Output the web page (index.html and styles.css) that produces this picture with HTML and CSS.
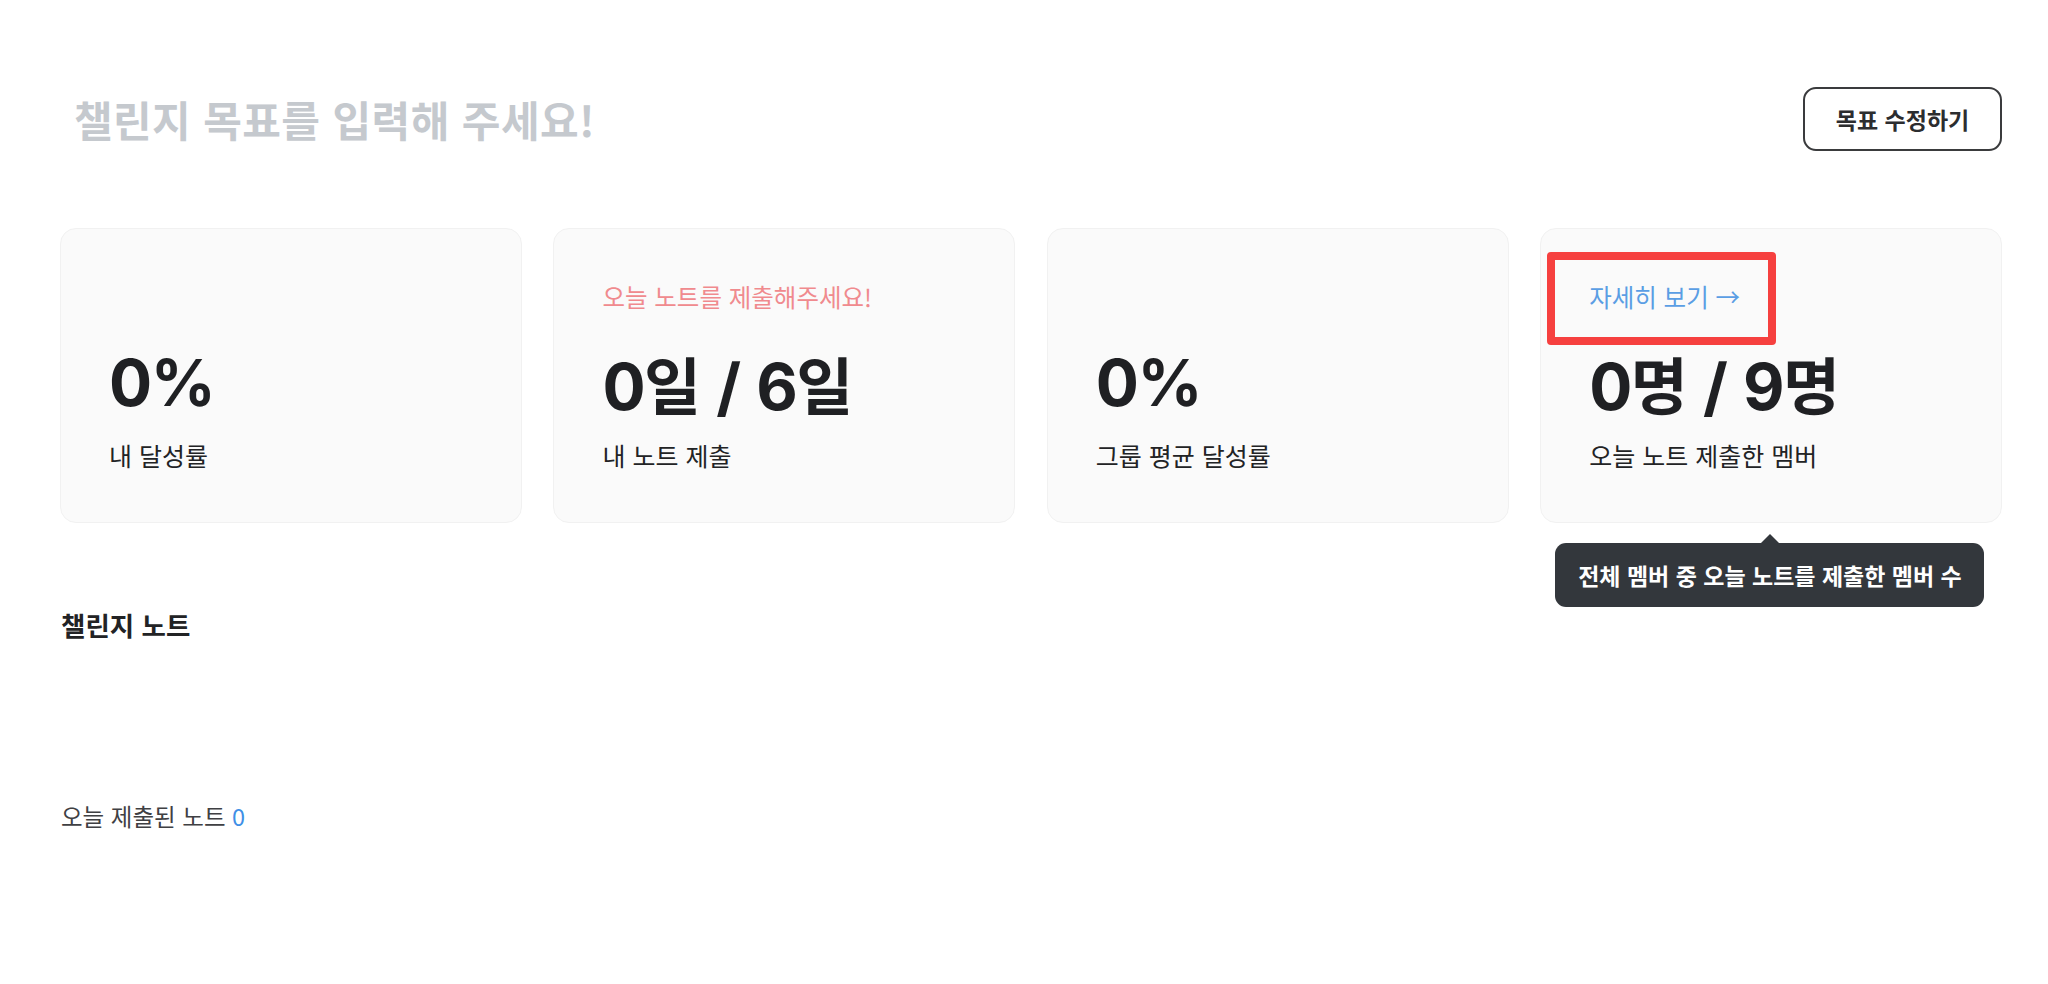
FILE: index.html
```html
<!DOCTYPE html>
<html lang="ko">
<head>
<meta charset="utf-8">
<title>챌린지</title>
<link rel="stylesheet" href="styles.css">
</head>
<body>
<main class="page">
  <header class="header">
    <h1 class="goal-title">챌린지 목표를 입력해 주세요!</h1>
    <button class="edit-btn" type="button">목표 수정하기</button>
  </header>

  <section class="stats">
    <div class="card">
      <div class="card-top"></div>
      <div class="card-value">0%</div>
      <div class="card-label">내 달성률</div>
    </div>
    <div class="card">
      <div class="card-top card-top--warn">오늘 노트를 제출해주세요!</div>
      <div class="card-value">0<span class="unit">일</span> / 6<span class="unit">일</span></div>
      <div class="card-label">내 노트 제출</div>
    </div>
    <div class="card">
      <div class="card-top"></div>
      <div class="card-value">0%</div>
      <div class="card-label">그룹 평균 달성률</div>
    </div>
    <div class="card card--tip">
      <div class="card-top"><a class="detail-link" href="#">자세히 보기 →</a></div>
      <div class="card-value">0<span class="unit">명</span> / 9<span class="unit">명</span></div>
      <div class="card-label">오늘 노트 제출한 멤버</div>
      <div class="highlight-box"></div>
      <div class="tooltip">전체 멤버 중 오늘 노트를 제출한 멤버 수</div>
    </div>
  </section>

  <h2 class="section-title">챌린지 노트</h2>
  <p class="today-count">오늘 제출된 노트 <span class="count">0</span></p>
</main>
</body>
</html>
```

FILE: styles.css
```css
* { box-sizing: border-box; }
html, body { margin: 0; padding: 0; background: #ffffff; }
body {
  font-family: "Noto Sans CJK KR", "Noto Sans", sans-serif;
  color: #222325;
}
.page {
  padding: 87px 46px 0 60px;
}
.header {
  display: flex;
  align-items: center;
  justify-content: space-between;
  height: 64px;
}
.goal-title {
  margin: 0;
  padding-left: 14px;
  font-size: 42px;
  font-weight: 700;
  line-height: 64px;
  color: #c5c9ce;
  letter-spacing: 0.4px;
}
.edit-btn {
  width: 199px;
  height: 64px;
  border: 2px solid #3a3b3d;
  border-radius: 13px;
  background: #fff;
  font-family: "Noto Sans CJK KR", sans-serif;
  font-size: 23px;
  font-weight: 700;
  color: #2c2d2f;
  padding: 0;
}
.stats {
  margin-top: 77px;
  display: grid;
  grid-template-columns: repeat(4, 1fr);
  gap: 31.5px;
}
.card {
  position: relative;
  height: 295px;
  padding: 52px 48px 0 48px;
  background: #fafafa;
  border: 1px solid #f1f1f1;
  border-radius: 16px;
}
.card-top {
  height: 32px;
  font-size: 24.5px;
  line-height: 32px;
}
.card-top--warn { color: #f08a8e; }
.detail-link {
  color: #5a9ee4;
  text-decoration: none;
}
.card-value {
  margin-top: 32px;
  height: 76px;
  font-family: "Inter", "Noto Sans CJK KR", sans-serif;
  font-size: 64px;
  font-weight: 700;
  line-height: 76px;
  color: #1f2023;
  letter-spacing: -1.5px;
  word-spacing: 3px;
  white-space: nowrap;
}
.unit {
  font-family: "Noto Sans CJK KR", sans-serif;
  font-size: 62px;
}
.card-label {
  margin-top: 17px;
  font-size: 25px;
  line-height: 34px;
  color: #222325;
}
.highlight-box {
  position: absolute;
  left: 6px;
  top: 23px;
  width: 229px;
  height: 93px;
  border: 8px solid #f6403f;
  border-radius: 4px;
}
.tooltip {
  position: absolute;
  left: 14px;
  top: 314px;
  width: 429px;
  height: 64px;
  padding: 0 23px;
  background: #33373c;
  border-radius: 11px;
  color: #ffffff;
  font-size: 23px;
  font-weight: 700;
  line-height: 64px;
  white-space: nowrap;
}
.tooltip::before {
  content: "";
  position: absolute;
  left: 206px;
  top: -9px;
  border-left: 9px solid transparent;
  border-right: 9px solid transparent;
  border-bottom: 9px solid #33373c;
}
.section-title {
  margin: 84px 0 0 1px;
  font-size: 26.5px;
  font-weight: 700;
  line-height: 36px;
  color: #222325;
}
.today-count {
  margin: 157px 0 0 1px;
  font-size: 23.5px;
  line-height: 32px;
  color: #3f4043;
}
.count { color: #3f8fe6; }
```
